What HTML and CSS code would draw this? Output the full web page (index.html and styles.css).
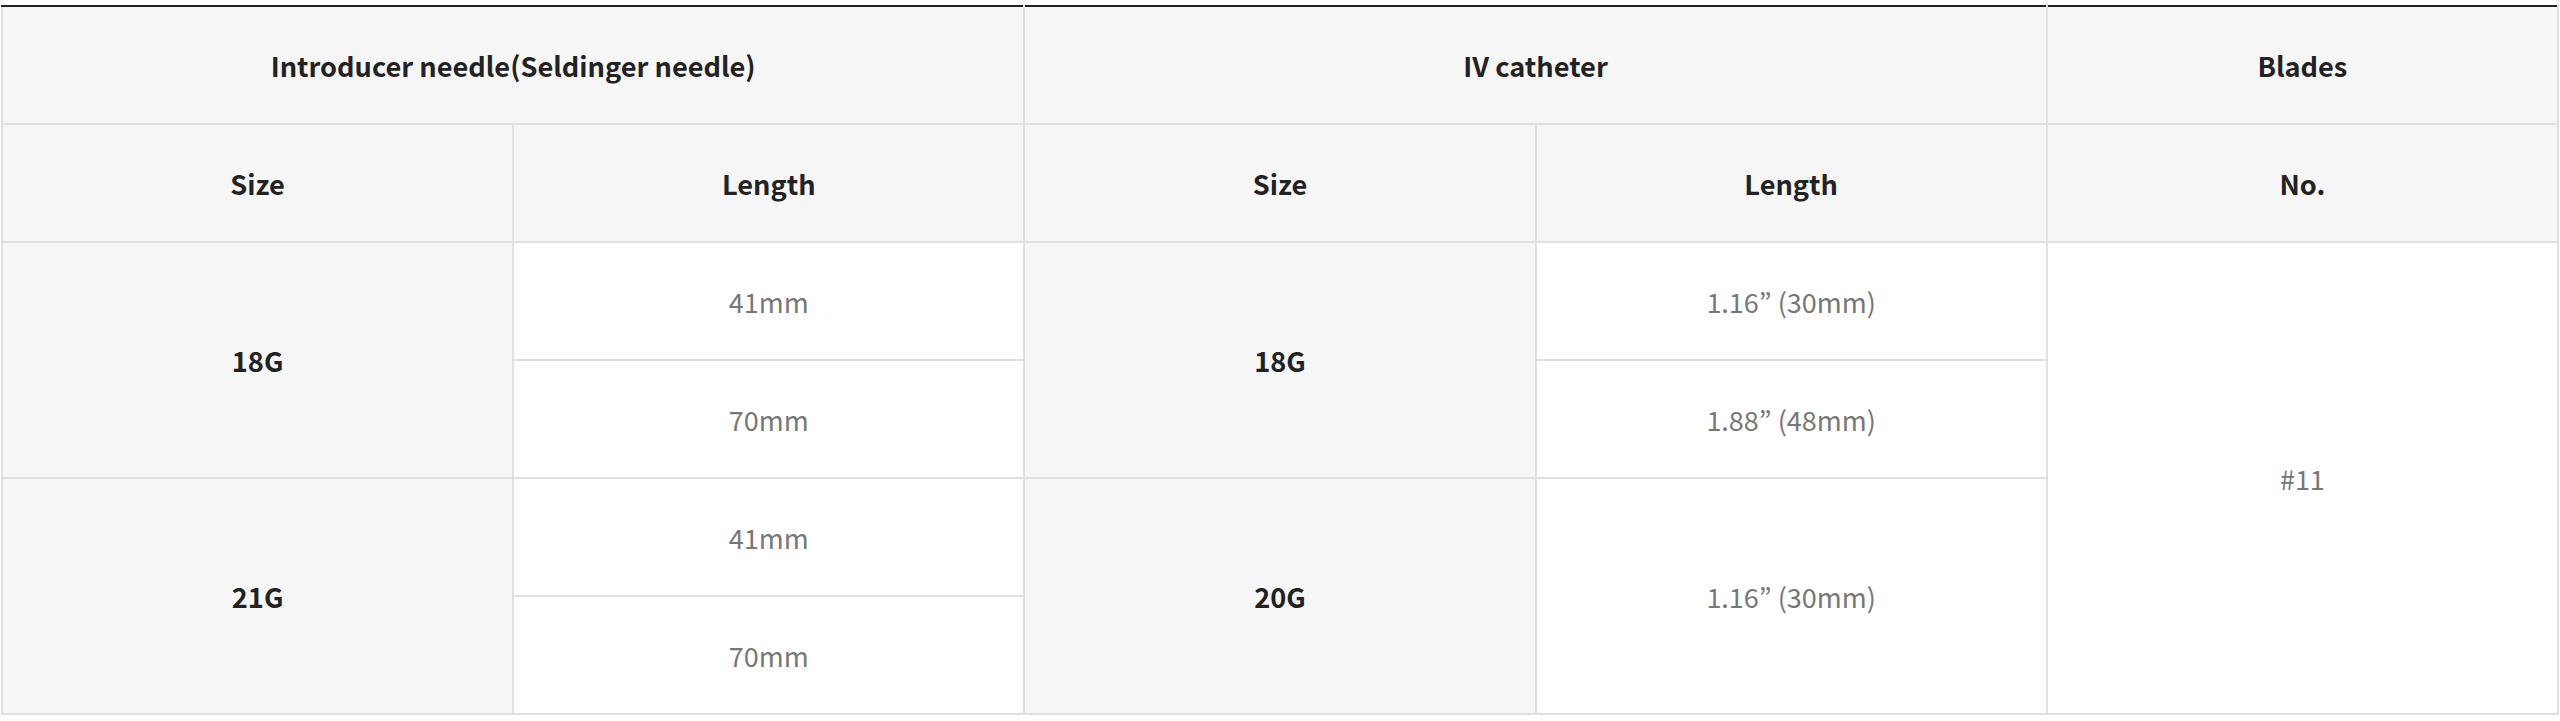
FILE: index.html
```html
<!DOCTYPE html>
<html lang="en">
<head>
<meta charset="utf-8">
<title>Spec table</title>
<link rel="stylesheet" href="styles.css">
</head>
<body>
<div class="wrap">
<table class="spec">
  <colgroup>
    <col class="c"><col class="c"><col class="c"><col class="c"><col class="c">
  </colgroup>
  <thead>
    <tr>
      <th colspan="2">Introducer needle(Seldinger needle)</th>
      <th colspan="2">IV catheter</th>
      <th>Blades</th>
    </tr>
    <tr>
      <th>Size</th>
      <th>Length</th>
      <th>Size</th>
      <th>Length</th>
      <th>No.</th>
    </tr>
  </thead>
  <tbody>
    <tr>
      <th rowspan="2">18G</th>
      <td>41mm</td>
      <th rowspan="2">18G</th>
      <td>1.16” (30mm)</td>
      <td rowspan="4">#11</td>
    </tr>
    <tr>
      <td>70mm</td>
      <td>1.88” (48mm)</td>
    </tr>
    <tr>
      <th rowspan="2">21G</th>
      <td>41mm</td>
      <th rowspan="2">20G</th>
      <td rowspan="2">1.16” (30mm)</td>
    </tr>
    <tr>
      <td>70mm</td>
    </tr>
  </tbody>
</table>
</div>
</body>
</html>
```
FILE: styles.css
```css
html, body {
  margin: 0;
  padding: 0;
  background: #ffffff;
}
.wrap {
  padding: 5px 1px 0 1px;
}
.spec {
  width: 100%;
  border-collapse: collapse;
  table-layout: fixed;
  border-top: 2px solid #222222;
  font-family: "Noto Sans CJK KR", "Noto Sans", sans-serif;
}
.spec th,
.spec td {
  border: 2px solid #e0e0e0;
  height: 116px;
  padding: 0;
  text-align: center;
  vertical-align: middle;
}
.spec thead tr:first-child th {
  border-top: 2px solid #222222;
}
.spec th {
  background: #f6f6f6;
  color: #222222;
  font-size: 27.2px;
  font-weight: 700;
}
.spec td {
  background: #ffffff;
  color: #777777;
  font-size: 27px;
  font-weight: 400;
}
```
